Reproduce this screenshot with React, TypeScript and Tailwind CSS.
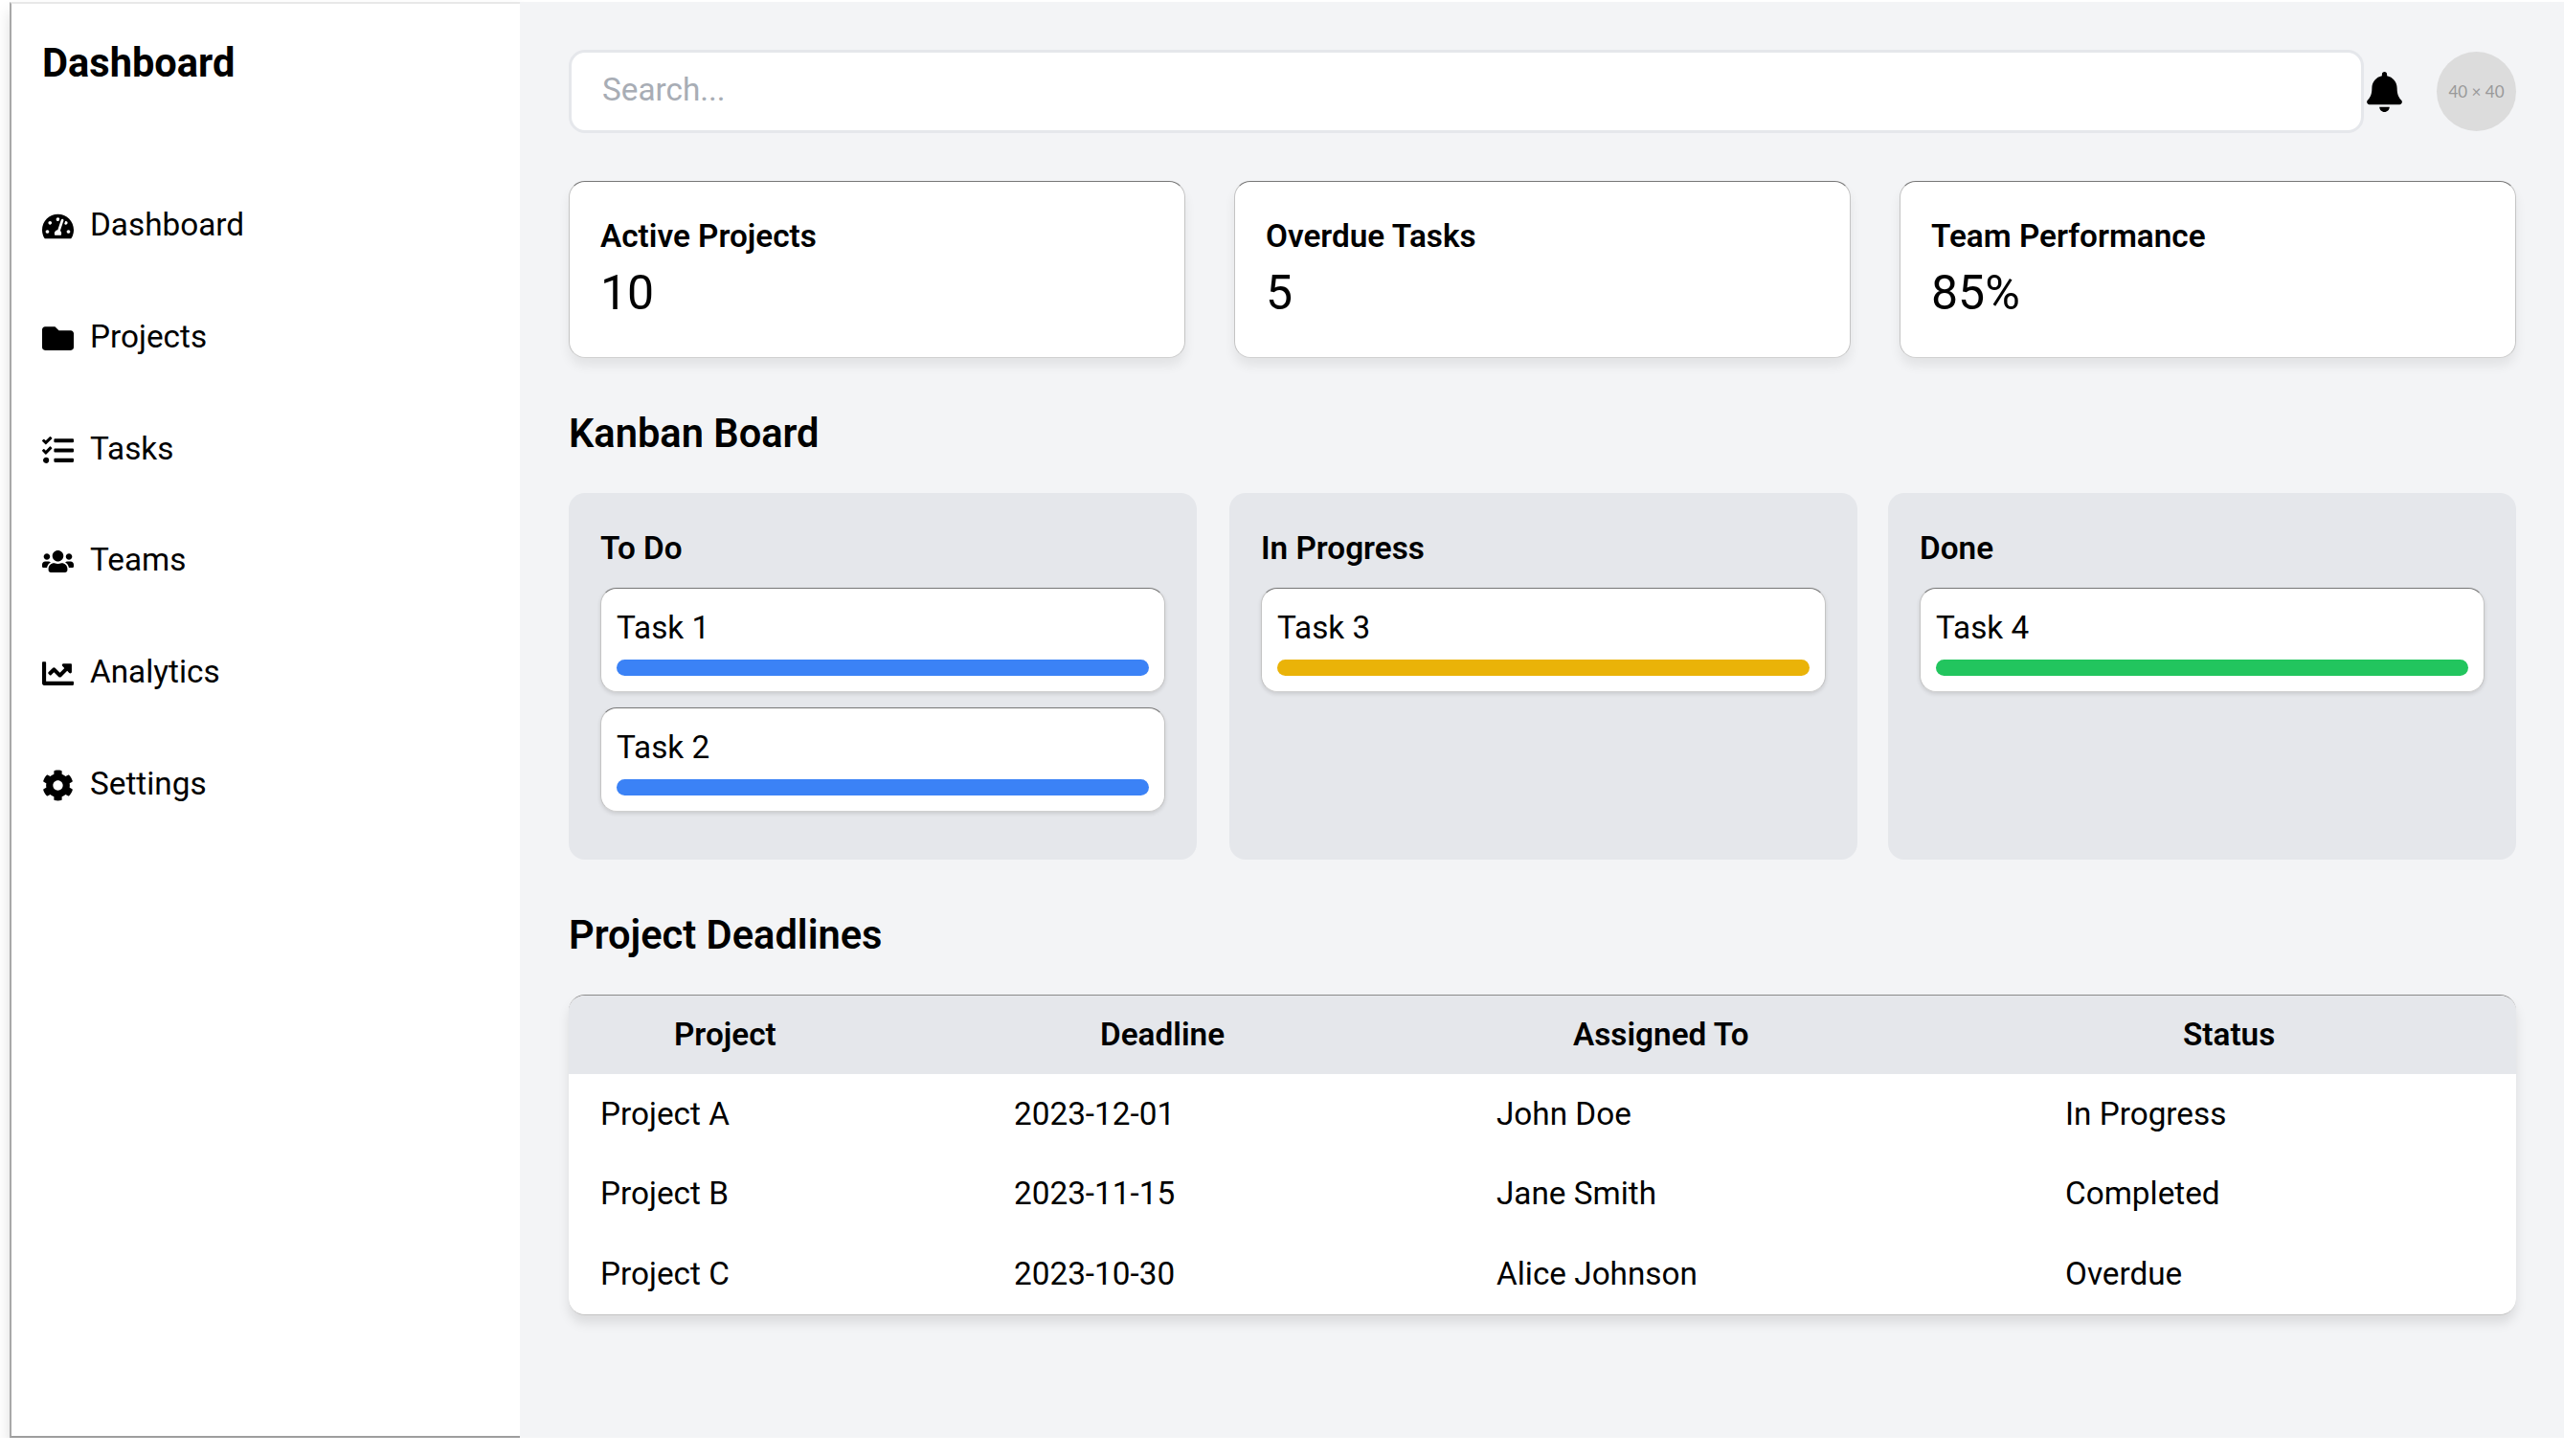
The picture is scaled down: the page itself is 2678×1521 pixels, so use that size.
import { FaBell, FaChartLine, FaCog, FaFolder, FaTachometerAlt, FaTasks, FaUsers } from "react-icons/fa";

const navItems = [
  { label: "Dashboard", icon: FaTachometerAlt },
  { label: "Projects", icon: FaFolder },
  { label: "Tasks", icon: FaTasks },
  { label: "Teams", icon: FaUsers },
  { label: "Analytics", icon: FaChartLine },
  { label: "Settings", icon: FaCog },
];

const stats = [
  { title: "Active Projects", value: "10" },
  { title: "Overdue Tasks", value: "5" },
  { title: "Team Performance", value: "85%" },
];

const columns = [
  { title: "To Do", bar: "bg-[#3b82f6]", shift: "", tasks: ["Task 1", "Task 2"] },
  { title: "In Progress", bar: "bg-[#eab308]", shift: "translate-x-[1px]", tasks: ["Task 3"] },
  { title: "Done", bar: "bg-[#22c55e]", shift: "", tasks: ["Task 4"] },
];

const projects = [
  ["Project A", "2023-12-01", "John Doe", "In Progress"],
  ["Project B", "2023-11-15", "Jane Smith", "Completed"],
  ["Project C", "2023-10-30", "Alice Johnson", "Overdue"],
];

const cardEdge = "border border-x-[#c4c4c4] border-t-[#777777] border-b-[#d0d0d0] bg-white";

export default function App() {
  return (
    <div className="flex h-[1502px] pl-[10px] pt-[2px] font-['Roboto',sans-serif] text-[33.3px] leading-[50px] text-black">
      <aside className="w-[533px] shrink-0 border-b-2 border-l-2 border-t-2 border-b-[#9e9e9e] border-l-[#a8a8a8] border-t-[#e8e8e8] bg-white px-[32px] pt-[33px] shadow-[0_10px_15px_rgba(0,0,0,0.13)]">
        <h1 className="mb-[115px] text-[41.6px] font-bold leading-[58px]">Dashboard</h1>
        <nav className="flex flex-col gap-[66.8px]">
          {navItems.map((item) => (
            <a key={item.label} className="flex items-center gap-[17px]">
              <item.icon className="mt-[3px] shrink-0" size={33} />
              <span>{item.label}</span>
            </a>
          ))}
        </nav>
      </aside>

      <main className="flex-1 bg-[#f3f4f6] px-[51px] pt-[50px]">
        <header className="mb-[50px] flex items-center">
          <input
            placeholder="Search..."
            className="h-[87px] flex-1 rounded-[17px] border-[3px] border-[#e5e7eb] bg-white pb-[4px] pl-[32px] pr-[31px] text-[33.3px] outline-none placeholder:text-[#a8adb5]"
          />
          <FaBell className="ml-[3px] h-[42px] w-[37px] shrink-0" />
          <div className="ml-[36px] flex h-[83px] w-[83px] shrink-0 items-center justify-center rounded-full bg-[#dcdcdc] font-['Lato',sans-serif] text-[17px] text-[#999999]">
            40 × 40
          </div>
        </header>

        <section className="mb-[50px] grid grid-cols-3 gap-[51px]">
          {stats.map((stat) => (
            <div key={stat.title} className={`h-[185px] rounded-[17px] px-[32px] pt-[32px] shadow-[0_8px_12px_rgba(0,0,0,0.07)] ${cardEdge}`}>
              <h2 className="font-semibold">{stat.title}</h2>
              <p className="text-[50px] leading-[68px]">{stat.value}</p>
            </div>
          ))}
        </section>

        <h2 className="mb-[33px] text-[41.6px] font-semibold leading-[58px]">Kanban Board</h2>
        <section className="mb-[50px] grid grid-cols-3 gap-[33px]">
          {columns.map((column) => (
            <div key={column.title} className={`rounded-[17px] bg-[#e5e7eb] px-[33px] pb-[34px] pt-[33px] ${column.shift}`}>
              <h3 className="mb-[16px] font-semibold">{column.title}</h3>
              {column.tasks.map((task) => (
                <div key={task} className={`mb-[16px] h-[109px] rounded-[17px] px-[16px] pt-[16px] shadow-[0_2px_4px_rgba(0,0,0,0.12)] ${cardEdge}`}>
                  <p>{task}</p>
                  <div className={`mt-[8px] h-[17px] rounded-full ${column.bar}`} />
                </div>
              ))}
            </div>
          ))}
        </section>

        <h2 className="mb-[33px] text-[41.6px] font-semibold leading-[58px]">Project Deadlines</h2>
        <div className="overflow-hidden rounded-[17px] border-b border-t border-b-[#c4c4c4] border-t-[#8a8a8a] bg-white shadow-[0_8px_12px_rgba(0,0,0,0.1)]">
          <table className="w-full table-fixed">
            <colgroup>
              <col className="w-[432px]" />
              <col className="w-[504px]" />
              <col className="w-[594px]" />
              <col className="w-[504px]" />
            </colgroup>
            <thead className="bg-[#e5e7eb] text-left">
              <tr className="h-[82px]">
                <th className="pl-[110px] font-semibold">Project</th>
                <th className="pl-[123px] font-semibold">Deadline</th>
                <th className="pl-[113px] font-semibold">Assigned To</th>
                <th className="pl-[156px] font-semibold">Status</th>
              </tr>
            </thead>
            <tbody>
              {projects.map((row) => (
                <tr key={row[0]} className="h-[83.6px]">
                  {row.map((cell) => (
                    <td key={cell} className="pl-[33px]">{cell}</td>
                  ))}
                </tr>
              ))}
            </tbody>
          </table>
        </div>
      </main>
    </div>
  );
}
